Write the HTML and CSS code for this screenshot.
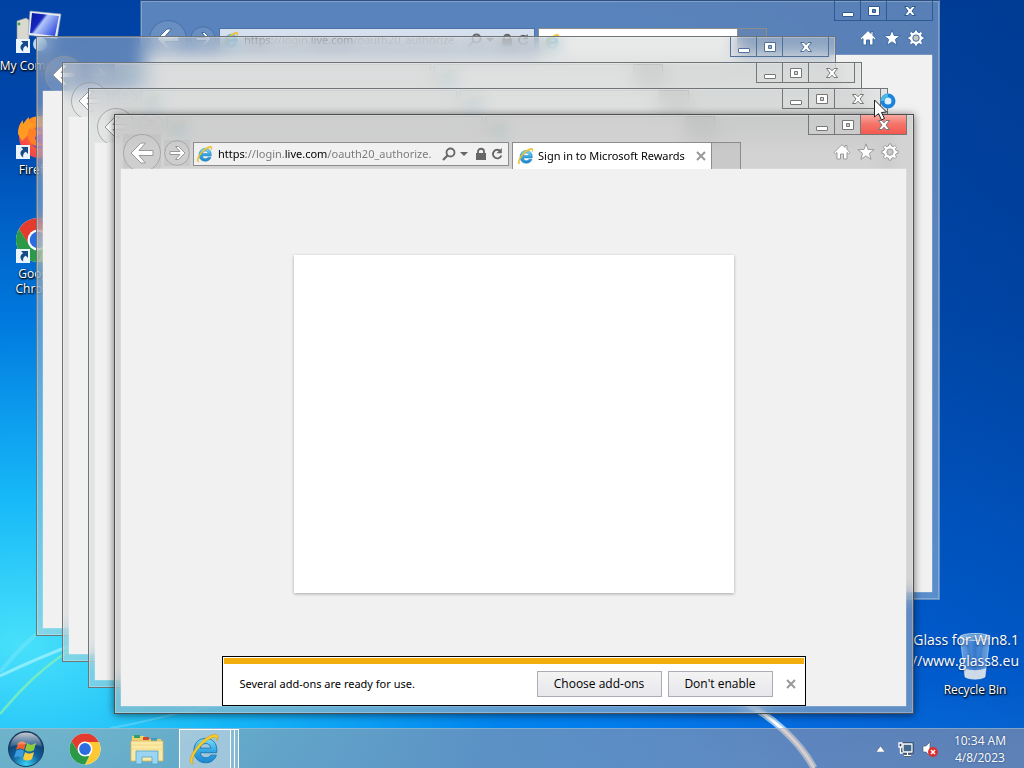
FILE: index.html
```html
<!DOCTYPE html>
<html lang="en">
<head>
<meta charset="utf-8">
<title>Desktop</title>
<link rel="stylesheet" href="styles.css">
</head>
<body>
<svg class="defs" aria-hidden="true">
  <defs>
    <linearGradient id="ieBlue" x1="0" y1="0" x2="0" y2="1"><stop offset="0" stop-color="#7fe0fb"/><stop offset=".5" stop-color="#34a8e6"/><stop offset="1" stop-color="#1d86d0"/></linearGradient>
    <linearGradient id="screen" x1="0" y1="0" x2="1" y2=".6"><stop offset="0" stop-color="#0a1a9a"/><stop offset=".4" stop-color="#1626c0"/><stop offset=".5" stop-color="#b4c8fa"/><stop offset="1" stop-color="#3b55e0"/></linearGradient>
    <linearGradient id="fox" x1="1" y1="0" x2="0" y2="1"><stop offset="0" stop-color="#ffd23a"/><stop offset=".5" stop-color="#ff7a1c"/><stop offset="1" stop-color="#f0246a"/></linearGradient>
    <radialGradient id="orb" cx=".5" cy=".95" r=".9"><stop offset="0" stop-color="#38d4f8"/><stop offset=".45" stop-color="#11619c"/><stop offset="1" stop-color="#0a2c55"/></radialGradient>
    <linearGradient id="shine" x1="0" y1="0" x2="0" y2="1"><stop offset="0" stop-color="#fff" stop-opacity=".75"/><stop offset="1" stop-color="#fff" stop-opacity=".12"/></linearGradient>
    <linearGradient id="bin" x1="0" y1="0" x2="1" y2="0"><stop offset="0" stop-color="#cfe4f6" stop-opacity=".5"/><stop offset=".5" stop-color="#5d95d6" stop-opacity=".6"/><stop offset="1" stop-color="#dcecf8" stop-opacity=".5"/></linearGradient>
    <symbol id="ie" viewBox="0 0 32 32">
      <path d="M27 19.500H11.500c.3 3 2.300 4.800 5.200 4.800 2.200 0 3.800-.9 4.800-2.500h5.200C25.200 26.300 21.500 29 16.500 29 10 29 5.500 24.300 5.500 17.500S10 6 16.500 6 27.500 10.500 27.200 17.800zM11.600 15.200h9.900c-.3-2.700-2.200-4.400-4.900-4.400s-4.600 1.700-5 4.400z" fill="url(#ieBlue)" stroke="#1572ad" stroke-width=".8" fill-rule="evenodd"/>
      <path d="M5 30C1.500 30.500 1 26 4.500 19.500 9 11 19 2.500 25.500 2.300c3.300 0 3.500 2.700 1.800 6.200.3-2.600-.5-3.800-2.800-3.500C18.500 6 8.500 15 5.200 23c-1.200 3.200-1.500 5.500-.2 7z" fill="#f8cf2c" stroke="#d79c10" stroke-width=".6"/>
    </symbol>
    <symbol id="chrome" viewBox="0 0 48 48">
      <circle cx="24" cy="24" r="22" fill="#fff"/>
      <path d="M24 14h19.600A22 22 0 0 1 24 46l8.700-17z" fill="#fcc934"/>
      <path d="M4.950 13A22 22 0 0 1 43.600 14H24l-9 15z" fill="#e33b2e"/>
      <path d="M4.950 13 15.300 29 24 34h6L24 46A22 22 0 0 1 4.950 13z" fill="#2a9a48"/>
      <circle cx="24" cy="24" r="10.500" fill="#fff"/><circle cx="24" cy="24" r="8.300" fill="#2b6de0"/>
    </symbol>
    <symbol id="shortcut" viewBox="0 0 14 14">
      <path d="M0 0h14v14H0z" fill="#eaf4fc"/>
      <path d="M5 2h7v7L9.800 6.800C7.500 8 6.800 9.500 7.200 12.500 3.300 9.800 3.800 6 7.200 4.200z" fill="#174a86"/>
    </symbol>
    <symbol id="back" viewBox="0 0 40 36"><circle cx="20" cy="20" r="18.500" class="ring"/><path d="M9 20 19 10h4.500L17 17.500h14v5H17l6.500 7.500H19z" class="shape"/></symbol>
    <symbol id="forward" viewBox="0 0 26 26"><circle cx="13" cy="13" r="12.300" class="ring"/><path d="M21 13l-6.500-6.500h-3L16 11.500H6v3h10l-4.500 5h3z" class="shape"/></symbol>
    <symbol id="home" viewBox="0 0 18 18"><path d="M9 1.500 1 9.500l1.500 1.300L4 9.500V16h3.500v-5h3v5H14V9.500l1.500 1.300L17 9.500l-3-3v-4h-2v2z" class="shape"/></symbol>
    <symbol id="star" viewBox="0 0 18 18"><path d="M9 .8l2.100 5.700 6.100.2-4.800 3.700 1.700 5.900L9 12.900l-5.100 3.400 1.700-5.900L.8 6.700l6.100-.2z" class="shape"/></symbol>
    <symbol id="gear" viewBox="0 0 18 18">
      <path d="M7.800 1h2.400l.4 2 1.600.7 1.700-1.200 1.700 1.700-1.200 1.700.7 1.600 2 .4v2.400l-2 .4-.7 1.600 1.200 1.700-1.700 1.700-1.700-1.200-1.600.7-.4 2H7.800l-.4-2-1.600-.7-1.700 1.200-1.700-1.700 1.200-1.700-.7-1.600-2-.4V7.900l2-.4.7-1.600-1.200-1.700 1.700-1.700 1.700 1.200L7.400 3z" class="shape"/><circle cx="9" cy="9.100" r="3.200" class="hole"/>
    </symbol>
    <symbol id="min" viewBox="0 0 14 14"><rect x="1.500" y="8.500" width="11" height="4" rx=".5" class="shape"/></symbol>
    <symbol id="max" viewBox="0 0 14 14"><path d="M1.500 2.500h11v9h-11zM5.500 5.500v3h3v-3z" class="shape" fill-rule="evenodd"/></symbol>
    <symbol id="close" viewBox="0 0 14 14"><path d="M1.500 2.500H5l2 2.300 2-2.300h3.500L9 7l3.500 4.500H9L7 9.200l-2 2.300H1.500L5 7z" class="shape"/></symbol>
    <symbol id="search" viewBox="0 0 14 14"><circle cx="8.500" cy="5.500" r="4" fill="none" stroke="#666" stroke-width="1.800"/><path d="M5.500 8.500 1 13" stroke="#666" stroke-width="2.200"/></symbol>
    <symbol id="lock" viewBox="0 0 12 14"><path d="M3 6V4.500C3 .8 9 .8 9 4.500V6" fill="none" stroke="#666" stroke-width="1.800"/><path d="M1 6h10v7H1z" fill="#666"/></symbol>
    <symbol id="reload" viewBox="0 0 12 14"><path d="M9.500 4.200A4.300 4.300 0 1 0 10.300 8.500" fill="none" stroke="#666" stroke-width="1.900"/><path d="M10.800 1v5.300H5.500z" fill="#666"/></symbol>
    <symbol id="x" viewBox="0 0 10 10"><path d="M1 1l8 8M9 1 1 9" stroke="#999" stroke-width="2"/></symbol>
  </defs>
</svg>

<div class="desktop">
  <svg class="streaks left-streaks" viewBox="0 0 260 150" aria-hidden="true">
    <path d="M0 58C25 46 48 36 80 24" stroke="#a8f4fc" stroke-width="3" fill="none" opacity=".7"/>
    <path d="M0 96C22 70 45 46 80 26" stroke="#7ff0b8" stroke-width="2.500" fill="none" opacity=".8"/>
    <path d="M0 54C16 34 32 18 50 6" stroke="#8cecfb" stroke-width="4" fill="none" opacity=".35"/>
    <path d="M110 110C150 104 180 92 230 86" stroke="#9be8ff" stroke-width="2" fill="none" opacity=".35"/>
  </svg>
  <svg class="streaks right-streaks" viewBox="0 0 120 70" aria-hidden="true">
    <path d="M25 3C55 18 83 44 97 70" stroke="#d8f4ff" stroke-width="7" fill="none" opacity=".7"/>
    <path d="M25 3C55 18 83 44 97 70" stroke="#fff" stroke-width="3" fill="none"/>
  </svg>

  <nav class="icons" aria-label="Desktop icons">
    <a class="icon" href="#computer">
      <svg width="48" height="48" viewBox="0 0 48 48" aria-hidden="true">
        <path d="M3 13l9-3 3 2v22l-8 3-4-3z" fill="#d9d9d2" stroke="#8f948e" stroke-width=".6"/><circle cx="5" cy="16" r="1.400" fill="#3ca040"/>
        <path d="M16 3l31 3-4 25-29-4z" fill="#e7ecf2" stroke="#8f9db4" stroke-width=".6"/><path d="M18 5l27 3-4 20-25-3z" fill="url(#screen)"/>
        <circle cx="26" cy="36" r="7" fill="#b9d8ee"/><use href="#shortcut" x="2" y="31" width="14" height="14"/>
      </svg>
      <span>My Computer</span>
    </a>
    <a class="icon" href="#firefox">
      <svg width="48" height="48" viewBox="0 0 48 48" aria-hidden="true">
        <circle cx="26" cy="25" r="21" fill="url(#fox)"/><path d="M4 22C4 15 6 11 9 8v4c2-2 3-5 6-7-1 5 3 6 7 7l-7 10-7 7z" fill="#ff9a22"/>
        <circle cx="27" cy="26" r="11" fill="#6a3fc8"/><path d="M15 17c5-1 9 0 13 4l-7 4c0 4 5 8 10 6-9 8-21-1-16-14z" fill="#ff7f26"/>
        <use href="#shortcut" x="2" y="33" width="14" height="14"/>
      </svg>
      <span>Firefox</span>
    </a>
    <a class="icon" href="#chrome-browser">
      <svg width="48" height="48" viewBox="0 0 48 48" aria-hidden="true"><use href="#chrome" width="48" height="48"/><use href="#shortcut" x="2" y="33" width="14" height="14"/></svg>
      <span>Google<br>Chrome</span>
    </a>
  </nav>

  <a class="icon recycle" href="#recycle">
    <svg width="48" height="48" viewBox="0 0 48 48" aria-hidden="true">
      <path d="M9 4h30l-5 41c-5 3-15 3-20 0z" fill="url(#bin)" stroke="#dcecf8" stroke-opacity=".5"/>
      <ellipse cx="24" cy="5" rx="15" ry="3.500" fill="#8eb9de" fill-opacity=".6" stroke="#e8f3fb" stroke-opacity=".7"/>
      <path d="M13 36c6 3 16 3 22 0l-1 9c-5 3-15 3-20 0z" fill="#e7e9ea" opacity=".85"/><path d="M17 12l3 22M24 13v22M31 12l-3 22" stroke="#3774c0" stroke-width="3" opacity=".4"/>
    </svg>
    <span>Recycle Bin</span>
  </a>
  <p class="watermark">Glass for Win8.1<br>//www.glass8.eu</p>

  <section class="window w0" aria-label="Internet Explorer">
    <header class="chrome">
      <div class="caption"><button aria-label="Minimize"><svg><use href="#min"/></svg></button><button aria-label="Maximize"><svg><use href="#max"/></svg></button><button class="shut" aria-label="Close"><svg><use href="#close"/></svg></button></div>
      <div class="nav"><button aria-label="Back"><svg class="bk"><use href="#back"/></svg></button><button aria-label="Forward"><svg class="fw"><use href="#forward"/></svg></button></div>
      <div class="address"><svg class="fav"><use href="#ie"/></svg><input aria-label="Address" value="https://login.live.com/oauth20_authorize."><svg class="g14"><use href="#search"/></svg><i class="down"></i><svg class="g12"><use href="#lock"/></svg><svg class="g12"><use href="#reload"/></svg></div>
      <div class="tab"><svg class="fav"><use href="#ie"/></svg></div><button class="newtab" aria-label="New tab"></button>
      <div class="tools"><button aria-label="Home"><svg><use href="#home"/></svg></button><button aria-label="Favorites"><svg><use href="#star"/></svg></button><button aria-label="Tools"><svg><use href="#gear"/></svg></button></div>
    </header>
    <div class="page"></div>
  </section>

  <section class="window w1" aria-label="Internet Explorer">
    <header class="chrome">
      <div class="caption"><button aria-label="Minimize"><svg><use href="#min"/></svg></button><button aria-label="Maximize"><svg><use href="#max"/></svg></button><button class="shut" aria-label="Close"><svg><use href="#close"/></svg></button></div>
      <div class="nav"><button aria-label="Back"><svg class="bk"><use href="#back"/></svg></button><button aria-label="Forward"><svg class="fw"><use href="#forward"/></svg></button></div>
      <div class="address"><svg class="fav"><use href="#ie"/></svg></div>
      <div class="tab"><svg class="fav"><use href="#ie"/></svg></div><button class="newtab" aria-label="New tab"></button>
    </header>
    <div class="page"></div>
  </section>

  <section class="window w2" aria-label="Internet Explorer">
    <header class="chrome">
      <div class="caption"><button aria-label="Minimize"><svg><use href="#min"/></svg></button><button aria-label="Maximize"><svg><use href="#max"/></svg></button><button class="shut" aria-label="Close"><svg><use href="#close"/></svg></button></div>
      <div class="nav"><button aria-label="Back"><svg class="bk"><use href="#back"/></svg></button><button aria-label="Forward"><svg class="fw"><use href="#forward"/></svg></button></div>
      <div class="address"><svg class="fav"><use href="#ie"/></svg></div>
      <div class="tab"><svg class="fav"><use href="#ie"/></svg></div><button class="newtab" aria-label="New tab"></button>
    </header>
    <div class="page"></div>
  </section>

  <section class="window w3" aria-label="Internet Explorer">
    <header class="chrome">
      <div class="caption"><button aria-label="Minimize"><svg><use href="#min"/></svg></button><button aria-label="Maximize"><svg><use href="#max"/></svg></button><button class="shut" aria-label="Close"><svg><use href="#close"/></svg></button></div>
      <div class="nav"><button aria-label="Back"><svg class="bk"><use href="#back"/></svg></button><button aria-label="Forward"><svg class="fw"><use href="#forward"/></svg></button></div>
      <div class="address"><svg class="fav"><use href="#ie"/></svg></div>
      <div class="tab"><svg class="fav"><use href="#ie"/></svg></div><button class="newtab" aria-label="New tab"></button>
    </header>
    <div class="page"></div>
  </section>

  <section class="window w4" aria-label="Sign in to Microsoft Rewards">
    <header class="chrome">
      <div class="caption"><button aria-label="Minimize"><svg><use href="#min"/></svg></button><button aria-label="Maximize"><svg><use href="#max"/></svg></button><button class="shut" aria-label="Close"><svg><use href="#close"/></svg></button></div>
      <div class="nav"><button aria-label="Back"><svg class="bk"><use href="#back"/></svg></button><button aria-label="Forward"><svg class="fw"><use href="#forward"/></svg></button></div>
      <div class="address"><svg class="fav"><use href="#ie"/></svg><input aria-label="Address" value="https://login.live.com/oauth20_authorize."><svg class="g14"><use href="#search"/></svg><i class="down"></i><svg class="g12"><use href="#lock"/></svg><svg class="g12"><use href="#reload"/></svg></div>
      <div class="tab"><svg class="fav"><use href="#ie"/></svg><span>Sign in to Microsoft Rewards</span><button class="x" aria-label="Close tab"><svg><use href="#x"/></svg></button></div><button class="newtab" aria-label="New tab"></button>
      <div class="tools"><button aria-label="Home"><svg><use href="#home"/></svg></button><button aria-label="Favorites"><svg><use href="#star"/></svg></button><button aria-label="Tools"><svg><use href="#gear"/></svg></button></div>
    </header>
    <div class="page">
      <main class="stage"><div class="card"></div></main>
      <div class="notice" role="alert">
        <p>Several add-ons are ready for use.</p>
        <button class="push choose">Choose add-ons</button>
        <button class="push">Don't enable</button>
        <button class="x" aria-label="Dismiss"><svg><use href="#x"/></svg></button>
      </div>
    </div>
  </section>

  <svg class="pointer" width="26" height="28" viewBox="0 0 26 28" aria-hidden="true">
    <circle cx="15" cy="8" r="5.500" fill="#dff1fc" stroke="#1c84dc" stroke-width="4"/><path d="M9.500 8A5.500 5.500 0 0 1 15 2.500" stroke="#4bb8ea" stroke-width="4" fill="none"/>
    <path d="M1.500 7v17l4-3.500 3 6.500 3-1.500-3-6 5-.5z" fill="#fff" stroke="#222" stroke-width="1"/>
  </svg>

  <footer class="taskbar">
    <button class="task start" aria-label="Start">
      <svg width="38" height="38" viewBox="0 0 38 38"><circle cx="19" cy="19" r="17.500" fill="url(#orb)" stroke="#1f3c5c"/>
        <path d="M11 13c3-2 5-2 8 0l-2 7c-3-2-5-2-8 0z" fill="#f0602c"/><path d="M20 13c3 2 5 2 9 0l-2 7c-3 2-6 2-9 0z" fill="#8ecb3c"/><path d="M9 21c3-2 5-2 8 0l-2 7c-3-2-5-2-8 0z" fill="#3b9de0"/><path d="M18 22c3 2 5 2 9 0l-2 7c-3 2-6 2-9 0z" fill="#fccc3a"/>
        <path d="M3 17C4 7 12 2.500 19 2.500S34 7 35 17c-9-4-22-4-32 0z" fill="url(#shine)"/></svg>
    </button>
    <button class="task" aria-label="Google Chrome"><svg width="34" height="34"><use href="#chrome"/></svg></button>
    <button class="task" aria-label="File Explorer">
      <svg width="34" height="32" viewBox="0 0 34 32"><path d="M2 3h12l2 3h15v21H2z" fill="#f1cf6a"/><path d="M4 2h6v3H4z" fill="#2fa06a"/><path d="M13 4h6v3h-6z" fill="#d6452f"/><path d="M21 5h6v3h-6z" fill="#3b9cc0"/><path d="M1 8h32v20H1z" fill="#fbeaa6" stroke="#d9b55a" stroke-width=".8"/><path d="M2 12h30M2 16h30" stroke="#f0d883"/><path d="M6 18h22v13h-6v-7H12v7H6z" fill="#9bd5f2" stroke="#4fa4cf" stroke-width=".8"/></svg>
    </button>
    <div class="stack"><button class="active" aria-label="Internet Explorer, 5 windows"><svg width="34" height="34"><use href="#ie"/></svg></button><i></i><i></i></div>
    <div class="tray">
      <button aria-label="Show hidden icons"><svg width="9" height="6" viewBox="0 0 9 6"><path d="M0 6 4.500 0 9 6z" fill="#fff" stroke="#345" stroke-width=".4"/></svg></button>
      <button aria-label="Network"><svg width="17" height="16" viewBox="0 0 17 16"><path d="M6 3h9v8H6zM10.500 11v3M7 14.500h7" fill="#5b7f9e" stroke="#1d2f44" stroke-width="3"/><path d="M6 3h9v8H6zM10.500 11v3M7 14.500h7" fill="#41688d" stroke="#fff" stroke-width="1.300"/><path d="M2 2h3v4H2zM3.500 6v6H6" fill="#345" stroke="#fff" stroke-width="1.300"/></svg></button>
      <button aria-label="Volume muted"><svg width="17" height="16" viewBox="0 0 17 16"><path d="M1 5h3l4-4v14l-4-4H1z" fill="#fff" stroke="#456" stroke-width=".6"/><circle cx="11" cy="11" r="5" fill="#d9302f"/><path d="M9 9l4 4M13 9l-4 4" stroke="#fff" stroke-width="1.500"/></svg></button>
      <time datetime="2023-04-08T10:34">10:34 AM<br>4/8/2023</time>
    </div>
  </footer>
</div>
</body>
</html>
```
FILE: styles.css
```css
* { box-sizing: border-box; }

html, body { height: 100%; margin: 0; }

body, button, input { font: 12px/16px "Open Sans", "Noto Sans", sans-serif; }

button { padding: 0; border: 0; background: none; color: inherit; }

a { color: inherit; text-decoration: none; }

svg { display: block; }

.defs { position: absolute; width: 0; height: 0; }

.desktop {
  position: relative;
  display: flex;
  flex-direction: column;
  justify-content: space-between;
  height: 100vh;
  overflow: hidden;
  background:
    radial-gradient(ellipse 78% 68% at 2% 84%, #48e0fa 0%, rgba(24, 190, 250, .95) 28%, rgba(0, 140, 240, .7) 62%, rgba(0, 100, 220, 0) 100%),
    linear-gradient(90deg, rgba(0, 20, 60, 0) 60%, rgba(0, 20, 60, .16)),
    linear-gradient(#0042a4 0%, #004cb4 40%, #0066e2 88%, #0a78f0 100%);
}

.streaks { position: absolute; }
.left-streaks { left: 0; bottom: 0; width: 260px; height: 150px; }
.right-streaks { left: 70%; bottom: 0; width: 120px; height: 70px; }

/* Desktop icons */
.icons { display: flex; flex-direction: column; gap: 39px; width: 76px; padding-top: 8px; }

.icon {
  display: flex;
  flex-direction: column;
  align-items: center;
  gap: 2px;
  width: 76px;
  color: #fff;
  line-height: 15px;
  text-align: center;
  white-space: nowrap;
  text-shadow: 0 1px 2px #000, 1px 1px 2px #000;
}

.recycle { position: absolute; right: 11px; bottom: 71px; }

.watermark {
  position: absolute;
  right: 5px;
  bottom: 97px;
  margin: 0;
  color: #fff;
  font-size: 14px;
  line-height: 21px;
  text-align: right;
  text-shadow: 0 1px 2px rgba(0, 20, 60, .7);
}

/* Windows */
.window {
  --ink: #777;
  position: absolute;
  display: flex;
  flex-direction: column;
  padding: 0 7px 7px 6px;
  border: 1px solid #6f7478;
  box-shadow: inset 0 0 0 1px rgba(255, 255, 255, .25);
  background: rgba(206, 207, 208, .44);
  backdrop-filter: blur(8px);
}

.w0 { --ink: #2c5a94; top: 0; left: 140px; right: 84px; bottom: 168px; border-color: #2b4f80 #5f8fc0 #5f8fc0 #3f6ba4; background: rgba(178, 196, 212, .5); }
.w1 { --ink: #52719a; top: 36px; left: 36px; right: 188px; bottom: 132px; }
.w2 { top: 62px; left: 62px; right: 162px; bottom: 106px; }
.w3 { top: 88px; left: 88px; right: 136px; bottom: 80px; }
.w4 { top: 114px; left: 114px; right: 110px; bottom: 54px; border-color: #4c4f52; background: rgba(184, 184, 184, .52); box-shadow: inset 0 0 0 1px rgba(255, 255, 255, .25), 0 1px 8px rgba(0, 0, 0, .55); }

.chrome { position: relative; display: flex; align-items: flex-end; height: 54px; flex: none; }

.ring { fill: rgba(255, 255, 255, .12); stroke: var(--ink); stroke-width: 1; opacity: .75; }
.shape { fill: #fff; stroke: var(--ink); stroke-width: 1; }
.hole { fill: #c8c8c8; stroke: var(--ink); stroke-width: 1; }
.w0 .hole { fill: #5585c0; }

.caption { position: absolute; top: 0; right: -1px; display: flex; border: solid var(--ink); border-width: 0 1px 1px; }
.caption button { display: grid; place-items: center; width: 26px; height: 19px; border-right: 1px solid var(--ink); }
.caption .shut { width: 45px; border-right: 0; }
.caption svg { width: 14px; height: 14px; }
.w4 .shut { background: linear-gradient(#f9aaa2, #f4766c 45%, #f4584e); }

.nav { display: flex; gap: 2px; padding: 0 2px 0 1px; height: 36px; }
.nav button { display: flex; align-items: center; height: 40px; }
.nav .bk { width: 40px; height: 36px; margin-bottom: 4px; }
.nav .fw { width: 26px; height: 26px; }
.nav, .tools { --ink: #999; }
.w0 .nav, .w0 .tools { --ink: #3f6ba4; }

.address {
  display: flex;
  align-items: center;
  gap: 4px;
  flex: 0 1 316px;
  height: 24px;
  margin: 0 3px 3px 1px;
  padding: 0 5px 0 2px;
  border: 1px solid #8c8c8c;
  background: rgba(255, 255, 255, .68);
}

.address input {
  flex: 1;
  min-width: 0;
  padding: 0;
  border: 0;
  outline: 0;
  color: transparent;
  font-family: "Noto Sans", "Open Sans", sans-serif;
  font-size: 11px;
  background: linear-gradient(90deg, #000 28px, #777 28px 67px, #000 67px 110px, #777 110px);
  -webkit-background-clip: text;
  background-clip: text;
}

.fav { width: 18px; height: 18px; flex: none; }
.g14 { width: 14px; height: 14px; flex: none; }
.g12 { width: 12px; height: 14px; flex: none; }
.down { margin-right: 3px; border: solid transparent; border-width: 4px 4px 0; border-top-color: #666; }

.tab {
  display: flex;
  align-items: center;
  gap: 3px;
  flex: none;
  width: 200px;
  height: 27px;
  padding: 0 5px 0 4px;
  border: solid #8c8c8c;
  border-width: 1px 1px 0;
  background: #fff;
  font-family: "Noto Sans", "Open Sans", sans-serif;
  font-size: 11px;
  white-space: nowrap;
}

.tab .x { margin-left: auto; }
.x svg { width: 10px; height: 10px; }

.newtab { width: 29px; height: 27px; border: solid #8c8c8c; border-width: 1px 1px 0 0; background: rgba(150, 150, 150, .15); }

.tools { display: flex; gap: 6px; margin: 0 7px 8px auto; }
.tools svg { width: 18px; height: 18px; }

.w0 .address { background: rgba(255, 255, 255, .75); border-color: #4a74a8; }
.w1 .address, .w2 .address, .w3 .address { background: rgba(255, 255, 255, .3); border-color: #b8b8b8; }
.w1 .tab, .w2 .tab, .w3 .tab { background: rgba(255, 255, 255, .4); border-color: #b8b8b8; }
.w1 .fav, .w2 .fav, .w3 .fav { opacity: .6; }

.page { display: flex; flex-direction: column; align-items: center; flex: 1; background: #f1f1f1; box-shadow: 0 0 1px #fff; }

.stage { display: grid; place-items: center; flex: 1; padding-top: 23px; }
.card { width: 440px; height: 338px; background: #fff; box-shadow: 0 1px 3px rgba(0, 0, 0, .3); }

.notice {
  display: flex;
  align-items: center;
  gap: 6px;
  width: 584px;
  height: 50px;
  padding: 5px 9px 0 17px;
  border: 1px solid #000;
  background: linear-gradient(#f2ae0c, #f2ae0c) 1px 1px / calc(100% - 2px) 6px no-repeat #fff;
}

.notice p { margin: 0 auto 0 0; font-family: "Noto Sans", "Open Sans", sans-serif; font-size: 11px; }
.notice .x { margin-left: 7px; }

.push { width: 105px; height: 26px; border: 1px solid #acacb8; background: linear-gradient(#f3f3f3, #e8e8ec); }
.choose { width: 125px; }

/* Pointer and taskbar */
.pointer { position: absolute; left: 873px; top: 93px; }

.taskbar {
  position: relative;
  display: flex;
  align-items: center;
  height: 40px;
  padding: 0 18px 0 7px;
  border-top: 1px solid rgba(170, 200, 220, .5);
  background: rgba(180, 158, 156, .5);
  color: #fff;
}

.task { display: grid; place-items: center; width: 38px; height: 40px; margin-right: 24px; }
.start { margin-right: 21px; }

.stack { display: flex; height: 40px; margin-left: -11px; }
.stack .active { display: grid; place-items: center; width: 52px; border: 1px solid #fff; background: rgba(220, 228, 236, .5); }
.stack i { width: 4px; border: solid #fff; border-width: 1px 1px 1px 0; background: rgba(220, 228, 236, .3); }

.tray { display: flex; align-items: center; gap: 8px; margin-left: auto; line-height: 17px; text-align: center; }
.tray button:first-child { margin-right: 4px; }
.tray time { margin-left: 7px; text-shadow: 0 0 2px rgba(0, 30, 70, .6); }
```
